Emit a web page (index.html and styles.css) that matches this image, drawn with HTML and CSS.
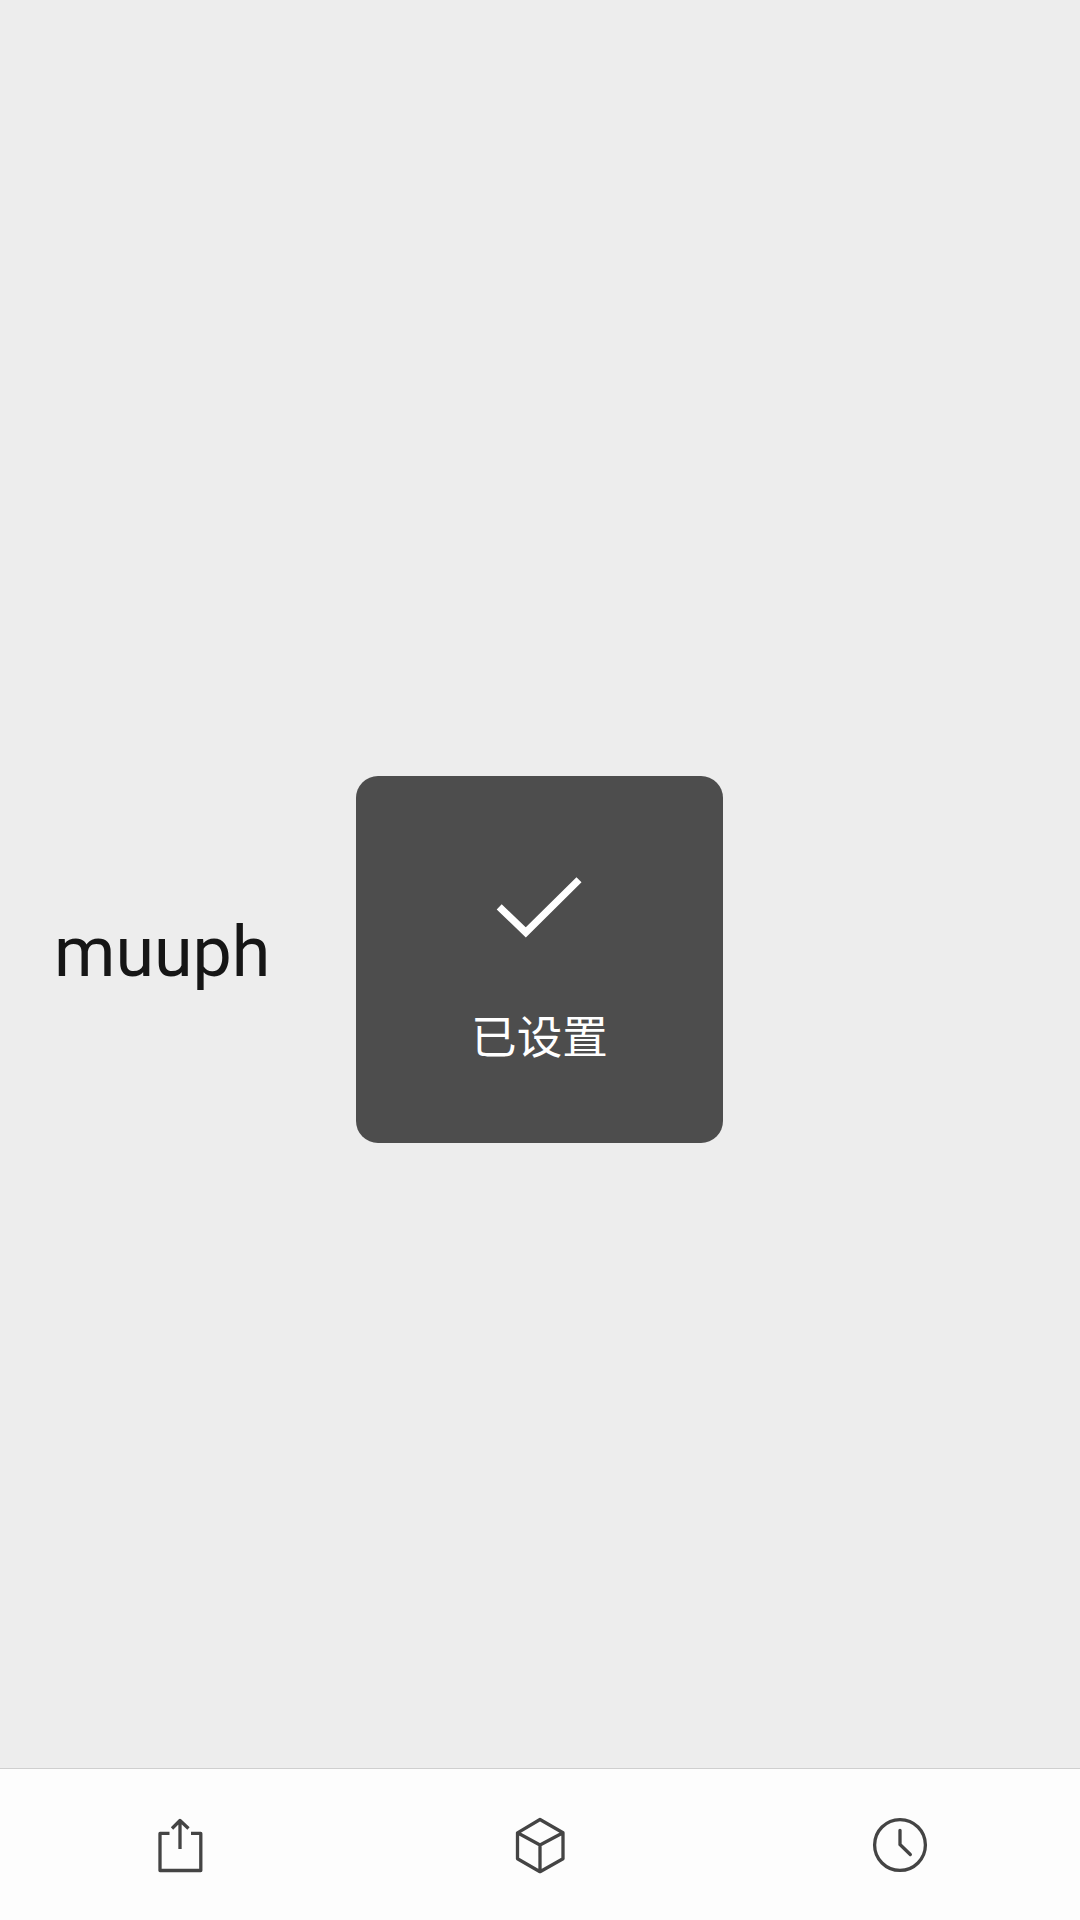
FILE: index.html
```html
<!DOCTYPE html>
<html lang="zh-CN">
<head>
  <meta charset="utf-8">
  <title>muuph</title>
  <link rel="stylesheet" href="styles.css">
</head>
<body>
  <div class="screen">
    <main class="content">
      <h1 class="word">muuph</h1>
    </main>
    <nav class="toolbar">
      <button class="tool" aria-label="分享">
        <svg class="icon" viewBox="0 0 80 90">
          <path stroke-linejoin="round" d="M29.5 33.4H20V70.5H60.8V33.4H51M40 49V20.5M32 28.5L40 20.5L48.5 28.5"/>
        </svg>
      </button>
      <button class="tool" aria-label="模型">
        <svg class="icon" viewBox="0 0 80 90">
          <path stroke-linejoin="round" d="M40 19.5L63 32.8V58.7L40 71.7L17.5 58.7V32.8ZM17.5 32.8L40 45L63 32.8M40 45V71.5"/>
        </svg>
      </button>
      <button class="tool" aria-label="历史">
        <svg class="icon" viewBox="0 0 80 90">
          <circle cx="40" cy="45" r="25.4"/>
          <path stroke-linecap="round" d="M40 30.3V44.5L50.3 54.5"/>
        </svg>
      </button>
    </nav>
    <div class="toast" role="status">
      <svg class="check" viewBox="0 0 90 66">
        <path d="M4.2 32.8L30.8 58.4L84 5.8"/>
      </svg>
      <span class="message">已设置</span>
    </div>
  </div>
</body>
</html>
```
FILE: styles.css
```css
body {
  margin: 0;
}

.screen {
  position: relative;
  display: flex;
  flex-direction: column;
  height: 1920px;
  background: #ededed;
  font-family: Roboto, "Noto Sans CJK SC", sans-serif;
}

.content {
  flex: 1;
  display: flex;
  align-items: center;
  padding: 136px 54px 0;
}

.word {
  margin: 0;
  font-size: 70px;
  line-height: 84px;
  font-weight: 400;
  color: #161616;
}

.toolbar {
  display: grid;
  grid-template-columns: repeat(3, 1fr);
  box-sizing: border-box;
  height: 152px;
  padding-top: 31px;
  border-top: 1px solid #cfcfcf;
  background: #fdfdfd;
}

.tool {
  display: flex;
  justify-content: center;
  align-items: flex-start;
  padding: 0;
  border: 0;
  background: none;
}

.icon {
  width: 80px;
  height: 90px;
  fill: none;
  stroke: #444;
  stroke-width: 3.3;
}

.toast {
  position: absolute;
  top: 776px;
  left: 356px;
  display: flex;
  flex-direction: column;
  align-items: center;
  box-sizing: border-box;
  width: 367px;
  height: 367px;
  padding-top: 98px;
  border-radius: 22px;
  background: #4d4d4d;
}

.check {
  width: 90px;
  height: 66px;
  fill: none;
  stroke: #fff;
  stroke-width: 7.2;
}

.message {
  margin-top: 66px;
  font-size: 45.6px;
  line-height: 66px;
  color: #fff;
}
```
